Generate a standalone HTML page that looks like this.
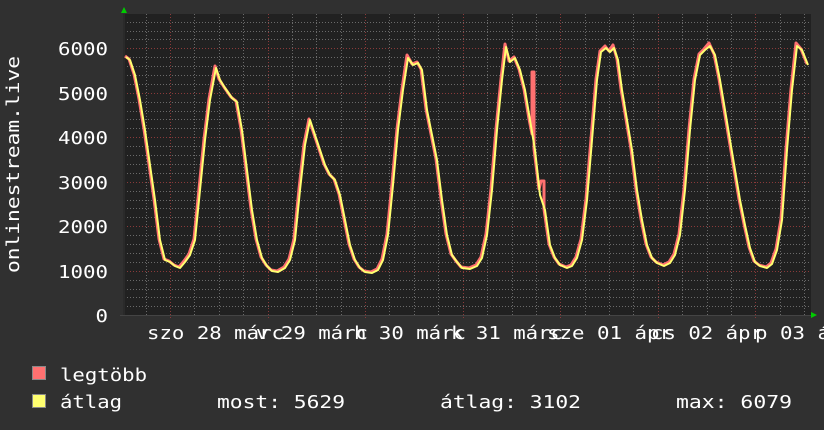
<!DOCTYPE html>
<html><head><meta charset="utf-8"><style>
html,body{margin:0;padding:0;background:#303030;}
svg{display:block}
text{font-family:"DejaVu Sans Mono","Liberation Mono",monospace;font-size:18px;fill:#ffffff}
</style></head><body>
<svg width="824" height="430" viewBox="0 0 824 430" xmlns="http://www.w3.org/2000/svg">
<rect width="824" height="430" fill="#303030"/>
<rect x="124" y="14" width="687" height="301" fill="#212121"/>
<g stroke="#6a6a6a" stroke-width="1" stroke-dasharray="1,2" shape-rendering="crispEdges">
<line x1="124" x2="811" y1="22.5" y2="22.5"/><line x1="124" x2="811" y1="31.5" y2="31.5"/><line x1="124" x2="811" y1="39.5" y2="39.5"/>
<line x1="124" x2="811" y1="57.5" y2="57.5"/><line x1="124" x2="811" y1="66.5" y2="66.5"/><line x1="124" x2="811" y1="75.5" y2="75.5"/><line x1="124" x2="811" y1="84.5" y2="84.5"/>
<line x1="124" x2="811" y1="102.5" y2="102.5"/><line x1="124" x2="811" y1="111.5" y2="111.5"/><line x1="124" x2="811" y1="119.5" y2="119.5"/><line x1="124" x2="811" y1="128.5" y2="128.5"/>
<line x1="124" x2="811" y1="146.5" y2="146.5"/><line x1="124" x2="811" y1="155.5" y2="155.5"/><line x1="124" x2="811" y1="164.5" y2="164.5"/><line x1="124" x2="811" y1="173.5" y2="173.5"/>
<line x1="124" x2="811" y1="191.5" y2="191.5"/><line x1="124" x2="811" y1="200.5" y2="200.5"/><line x1="124" x2="811" y1="208.5" y2="208.5"/><line x1="124" x2="811" y1="217.5" y2="217.5"/>
<line x1="124" x2="811" y1="235.5" y2="235.5"/><line x1="124" x2="811" y1="244.5" y2="244.5"/><line x1="124" x2="811" y1="253.5" y2="253.5"/><line x1="124" x2="811" y1="262.5" y2="262.5"/>
<line x1="124" x2="811" y1="280.5" y2="280.5"/><line x1="124" x2="811" y1="289.5" y2="289.5"/><line x1="124" x2="811" y1="297.5" y2="297.5"/><line x1="124" x2="811" y1="306.5" y2="306.5"/>
</g>
<g stroke="#8a3a3a" stroke-width="1" stroke-dasharray="1,2" shape-rendering="crispEdges">
<line x1="124" x2="811" y1="48.5" y2="48.5"/><line x1="124" x2="811" y1="93.5" y2="93.5"/><line x1="124" x2="811" y1="137.5" y2="137.5"/><line x1="124" x2="811" y1="182.5" y2="182.5"/><line x1="124" x2="811" y1="226.5" y2="226.5"/><line x1="124" x2="811" y1="271.5" y2="271.5"/>
<line x1="170.5" x2="170.5" y1="14" y2="318"/><line x1="268.5" x2="268.5" y1="14" y2="318"/><line x1="365.5" x2="365.5" y1="14" y2="318"/><line x1="463.5" x2="463.5" y1="14" y2="318"/><line x1="560.5" x2="560.5" y1="14" y2="318"/><line x1="658.5" x2="658.5" y1="14" y2="318"/><line x1="755.5" x2="755.5" y1="14" y2="318"/>
</g>
<g stroke="#6a6a6a" stroke-dasharray="1,2" shape-rendering="crispEdges">
<line x1="146.5" x2="146.5" y1="14" y2="315"/><line x1="194.5" x2="194.5" y1="14" y2="315"/><line x1="219.5" x2="219.5" y1="14" y2="315"/><line x1="243.5" x2="243.5" y1="14" y2="315"/>
<line x1="292.5" x2="292.5" y1="14" y2="315"/><line x1="316.5" x2="316.5" y1="14" y2="315"/><line x1="341.5" x2="341.5" y1="14" y2="315"/>
<line x1="389.5" x2="389.5" y1="14" y2="315"/><line x1="414.5" x2="414.5" y1="14" y2="315"/><line x1="438.5" x2="438.5" y1="14" y2="315"/>
<line x1="487.5" x2="487.5" y1="14" y2="315"/><line x1="512.5" x2="512.5" y1="14" y2="315"/><line x1="536.5" x2="536.5" y1="14" y2="315"/>
<line x1="585.5" x2="585.5" y1="14" y2="315"/><line x1="609.5" x2="609.5" y1="14" y2="315"/><line x1="633.5" x2="633.5" y1="14" y2="315"/>
<line x1="682.5" x2="682.5" y1="14" y2="315"/><line x1="707.5" x2="707.5" y1="14" y2="315"/><line x1="731.5" x2="731.5" y1="14" y2="315"/>
<line x1="780.5" x2="780.5" y1="14" y2="315"/><line x1="804.5" x2="804.5" y1="14" y2="315"/>
</g>
<line x1="124" y1="14" x2="124" y2="315" stroke="#2a2a2a" stroke-width="2"/>
<line x1="120" y1="315.5" x2="811" y2="315.5" stroke="#444" stroke-width="1"/>
<polygon points="121,13 124,7 127,13" fill="#00cc00"/>
<polygon points="811,312 817,315 811,318" fill="#00cc00"/>
<g fill="none" stroke-linejoin="round">
<polyline stroke="#ff7070" stroke-width="3" transform="translate(-1,-1)" points="126,57 130,60 135,75 140,100 145,130 150,165 155,200 160,240 165,260 170,262 175,266 180,268 185,262 190,255 195,240 200,190 205,140 210,100 216,67 220,80 225,88 232,98 237,102 242,130 247,170 252,210 257,240 262,258 267,266 272,271 278,272 285,268 290,260 295,240 300,190 305,145 310,120 315,135 320,150 325,165 330,175 335,180 340,195 345,220 350,245 355,260 360,268 365,272 372,273 378,270 383,260 388,235 393,185 398,130 403,90 408,56 413,65 418,63 422,70 427,110 432,135 437,160 442,200 447,235 452,255 457,262 462,268 470,269 477,266 482,258 487,235 492,190 497,130 502,80 506,45 510,62 515,58 520,70 525,90 530,120 533,135 533,73 535,73 535,150 540,190 542,182 545,182 545,210 550,245 555,258 560,265 567,268 572,266 577,258 582,240 587,200 592,140 597,80 601,52 606,47 610,52 614,46 618,60 622,90 627,120 632,150 637,190 642,220 647,245 652,258 657,263 664,266 670,263 675,255 680,235 685,190 690,130 695,80 700,55 705,50 710,44 715,55 720,80 725,110 730,140 735,170 740,200 745,225 750,248 755,262 760,266 767,268 772,264 777,250 782,220 787,150 792,90 797,44 802,50 806,60 808,65"/>
<polyline stroke="#ffff70" stroke-width="2" points="126,57 130,60 135,75 140,100 145,130 150,165 155,200 160,240 165,260 170,262 175,266 180,268 185,262 190,255 195,240 200,190 205,140 210,100 216,68 220,80 225,88 232,98 237,102 242,130 247,170 252,210 257,240 262,258 267,266 272,271 278,272 285,268 290,260 295,240 300,190 305,145 310,120 315,135 320,150 325,165 330,175 335,180 340,195 345,220 350,245 355,260 360,268 365,272 372,273 378,270 383,260 388,235 393,185 398,130 403,90 408,58 413,65 418,63 422,70 427,110 432,135 437,160 442,200 447,235 452,255 457,262 462,268 470,269 477,266 482,258 487,235 492,190 497,130 502,80 506,47 510,62 515,58 520,70 525,90 530,120 535,150 540,195 545,210 550,245 555,258 560,265 567,268 572,266 577,258 582,240 587,200 592,140 597,80 601,52 606,48 610,52 614,48 618,60 622,90 627,120 632,150 637,190 642,220 647,245 652,258 657,263 664,266 670,263 675,255 680,235 685,190 690,130 695,80 700,55 705,50 710,46 715,55 720,80 725,110 730,140 735,170 740,200 745,225 750,248 755,262 760,266 767,268 772,264 777,250 782,220 787,150 792,90 797,46 802,50 806,60 808,65"/>
</g>
<g text-anchor="end">
<text x="108" y="55" textLength="50" lengthAdjust="spacingAndGlyphs">6000</text>
<text x="108" y="100" textLength="50" lengthAdjust="spacingAndGlyphs">5000</text>
<text x="108" y="144" textLength="50" lengthAdjust="spacingAndGlyphs">4000</text>
<text x="108" y="189" textLength="50" lengthAdjust="spacingAndGlyphs">3000</text>
<text x="108" y="233" textLength="50" lengthAdjust="spacingAndGlyphs">2000</text>
<text x="108" y="278" textLength="50" lengthAdjust="spacingAndGlyphs">1000</text>
<text x="108" y="322" textLength="12.5" lengthAdjust="spacingAndGlyphs">0</text>
</g>
<text transform="translate(19,273) rotate(-90)" textLength="217" lengthAdjust="spacingAndGlyphs">onlinestream.live</text>
<g>
<text x="147" y="339" textLength="137" lengthAdjust="spacingAndGlyphs">szo 28 márc</text>
<text x="256" y="339" textLength="112" lengthAdjust="spacingAndGlyphs">v 29 márc</text>
<text x="354" y="339" textLength="112" lengthAdjust="spacingAndGlyphs">h 30 márc</text>
<text x="451" y="339" textLength="112" lengthAdjust="spacingAndGlyphs">k 31 márc</text>
<text x="547" y="339" textLength="125" lengthAdjust="spacingAndGlyphs">sze 01 ápr</text>
<text x="651" y="339" textLength="112" lengthAdjust="spacingAndGlyphs">cs 02 ápr</text>
<text x="755" y="339" textLength="100" lengthAdjust="spacingAndGlyphs">p 03 ápr</text>
</g>
<rect x="32.5" y="366.5" width="13" height="13" fill="#ff7070" stroke="#888"/>
<rect x="32.5" y="394.5" width="13" height="13" fill="#ffff70" stroke="#888"/>
<text x="60" y="381" textLength="87" lengthAdjust="spacingAndGlyphs">legtöbb</text>
<text x="60" y="408" textLength="62" lengthAdjust="spacingAndGlyphs">átlag</text>
<text x="217" y="408" textLength="128" lengthAdjust="spacingAndGlyphs">most: 5629</text>
<text x="440" y="408" textLength="141" lengthAdjust="spacingAndGlyphs">átlag: 3102</text>
<text x="676" y="408" textLength="116" lengthAdjust="spacingAndGlyphs">max: 6079</text>
</svg>
</body></html>
